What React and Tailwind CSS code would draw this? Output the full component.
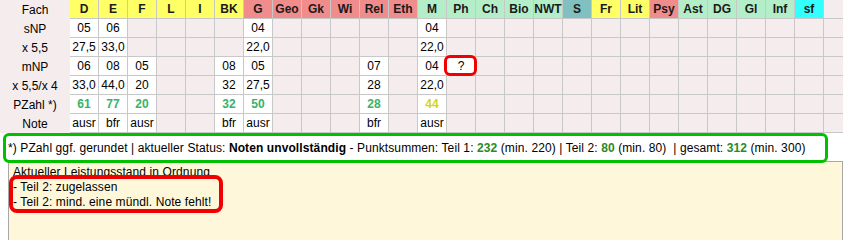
const Y = "bg-[#ffff66]";
const R = "bg-[#f08c8c]";
const G = "bg-[#b4eec8]";

const subjects = [
  ["D", Y], ["E", Y], ["F", Y], ["L", Y], ["I", Y], ["BK", Y],
  ["G", R], ["Geo", R], ["Gk", R], ["Wi", R], ["Rel", R], ["Eth", R],
  ["M", G], ["Ph", G], ["Ch", G], ["Bio", G], ["NWT", G],
  ["S", "bg-[#80c0c0]"], ["Fr", Y], ["Lit", Y], ["Psy", R],
  ["Ast", G], ["DG", G], ["Gl", G], ["Inf", G], ["sf", "bg-[#33ffff]"],
];

// values per row, keyed by subject
const rows = [
  { label: "sNP", vals: { D: "05", E: "06", G: "04", M: "04" } },
  { label: "x 5,5", vals: { D: "27,5", E: "33,0", G: "22,0", M: "22,0" } },
  { label: "mNP", vals: { D: "06", E: "08", F: "05", BK: "08", G: "05", Rel: "07", M: "04", Ph: "?" } },
  { label: "x 5,5/x 4", vals: { D: "33,0", E: "44,0", F: "20", BK: "32", G: "27,5", Rel: "28", M: "22,0" } },
  { label: "PZahl *)", pz: true, vals: { D: "61", E: "77", F: "20", BK: "32", G: "50", Rel: "28", M: "44" } },
  { label: "Note", vals: { D: "ausr", E: "bfr", F: "ausr", BK: "bfr", G: "ausr", Rel: "bfr", M: "ausr" } },
];

function Cell({ children, className = "" }) {
  return (
    <div className={"h-[19px] flex items-center justify-center border-r border-b border-[#c8c8c8] " + className}>
      {children}
    </div>
  );
}

export default function App() {
  return (
    <div
      className="w-[843px] h-[240px] overflow-hidden bg-white text-[12px] text-black tracking-[0.1px]"
      style={{ fontFamily: '"Liberation Sans", Arial, sans-serif' }}
    >
      {/* NOTEN-TABELLE */}
      <div className="relative grid grid-cols-[70px_repeat(26,29px)_1fr] bg-[#f5eded] tracking-normal">
        <div className="h-[19px] flex items-center justify-center">Fach</div>
        {subjects.map(([s, bg]) => (
          <Cell key={s} className={bg + " font-bold text-[#1a1a1a]"}>{s}</Cell>
        ))}
        <Cell className="border-r-0" />

        {rows.map((r) => (
          <div key={r.label} className="contents">
            <div className="h-[19px] flex items-center justify-center">{r.label}</div>
            {subjects.map(([s]) => {
              const v = r.vals[s];
              let color = "";
              if (r.pz && v) color = s === "M" ? "font-bold text-[#d4d41c]" : "font-bold text-[#35b36a]";
              return (
                <Cell key={s} className={(v ? "bg-white " : "") + color}>{v}</Cell>
              );
            })}
            <Cell className="border-r-0" />
          </div>
        ))}

        {/* Markierung "?" */}
        <div className="absolute left-[444px] top-[55px] w-[33px] h-[21px] border-[3px] border-[#f00000] rounded-md" />
      </div>

      {/* STATUS */}
      <div className="relative z-10 ml-[3px] w-[825px] h-[30px] border-[3px] border-[#00c000] rounded-md bg-white flex items-center pl-[2px] whitespace-nowrap">
        *) PZahl ggf. gerundet | aktueller Status:&nbsp;<b>Noten unvollständig</b>&nbsp;- Punktsummen: Teil 1:&nbsp;
        <b className="text-[#2a8a2a]">232</b>&nbsp;(min. 220) | Teil 2:&nbsp;<b className="text-[#2a8a2a]">80</b>
        &nbsp;(min. 80) &nbsp;| gesamt:&nbsp;<b className="text-[#2a8a2a]">312</b>&nbsp;(min. 300)
      </div>

      {/* MELDUNGEN */}
      <div className="relative ml-[8px] -mt-[2px] h-[90px] border border-[#a8a8a8] bg-[#fff7d9] pl-[4px] pt-[3px] leading-[15px]">
        <div>Aktueller Leistungsstand in Ordnung</div>
        <div>- Teil 2: zugelassen</div>
        <div>- Teil 2: mind. eine mündl. Note fehlt!</div>
        <div className="absolute left-0 top-[13px] w-[214px] h-[38px] border-[4px] border-[#f00000] rounded-lg" />
      </div>
    </div>
  );
}
